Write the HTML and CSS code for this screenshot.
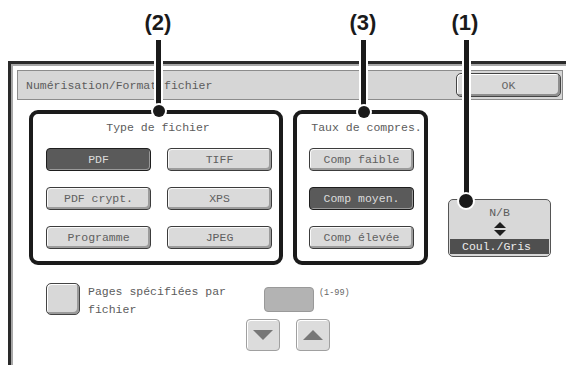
FILE: index.html
```html
<!doctype html>
<html>
  <head>
    <title>Numérisation/Format fichier</title>
    <meta charset="utf-8" />
    <link rel="stylesheet" href="styles.css">
  </head>
  <body>
    <div class="screen">
      <div class="window">
        <div class="titlebar">
          <span class="title">Numérisation/Format fichier</span>
          <div class="ok-key">OK</div>
        </div>

        <div class="main">
          <div class="group group-type">
            <div class="group-title">Type de fichier</div>
            <div class="type-grid">
              <div class="key selected">PDF</div>
              <div class="key">TIFF</div>
              <div class="key">PDF crypt.</div>
              <div class="key">XPS</div>
              <div class="key">Programme</div>
              <div class="key">JPEG</div>
            </div>
          </div>

          <div class="group group-rate">
            <div class="group-title">Taux de compres.</div>
            <div class="rate-list">
              <div class="key">Comp faible</div>
              <div class="key selected">Comp moyen.</div>
              <div class="key">Comp élevée</div>
            </div>
          </div>

          <div class="mode-key">
            <span class="mode-top">N/B</span>
            <svg class="mode-arrows" width="12" height="14" viewBox="0 0 12 14">
              <polygon points="0,6 6,0 12,6" fill="#1e1e1e" />
              <polygon points="0,8 12,8 6,14" fill="#1e1e1e" />
            </svg>
            <span class="mode-bottom">Coul./Gris</span>
          </div>
        </div>

        <div class="bottom">
          <div class="check"></div>
          <div class="check-label">Pages spécifiées par<br>fichier</div>
          <div class="spinner">
            <div class="spin-row">
              <div class="spin-value"></div>
              <span class="spin-hint">(1-99)</span>
            </div>
            <div class="spin-keys">
              <div class="step-key">
                <svg width="20" height="10" viewBox="0 0 20 10"><polygon points="0,0 20,0 10,10" fill="#777" /></svg>
              </div>
              <div class="step-key">
                <svg width="20" height="10" viewBox="0 0 20 10"><polygon points="0,10 20,10 10,0" fill="#777" /></svg>
              </div>
            </div>
          </div>
        </div>
      </div>

      <!-- callouts -->
      <div class="callout-label c2">(2)</div>
      <div class="callout-line l2"></div>
      <div class="callout-dot d2"></div>

      <div class="callout-label c3">(3)</div>
      <div class="callout-line l3"></div>
      <div class="callout-dot d3"></div>

      <div class="callout-label c1">(1)</div>
      <div class="callout-line l1"></div>
      <div class="callout-dot d1"></div>
    </div>
  </body>
</html>
```

FILE: styles.css
```css
* {
  box-sizing: border-box;
}

body {
  margin: 0;
  padding: 0;
  background: #fff;
  font-family: "Liberation Mono", "DejaVu Sans Mono", monospace;
  font-size: 11.5px;
  color: #5c5c5c;
}

.screen {
  position: relative;
  width: 566px;
  height: 365px;
  overflow: hidden;
  background: #fff;
}

.window {
  margin: 61px 0 0 8px;
  height: 304px;
  border-top: 3px solid #2a2a2a;
  border-left: 3px solid #2a2a2a;
  box-shadow: inset 2px 2px 0 #a8a8a8;
  overflow: hidden;
}

.titlebar {
  margin: 6px 3px 0 6px;
  height: 30px;
  padding: 0 1px 0 8px;
  border: 1px solid #8c8c8c;
  background: #d6d6d6;
  display: flex;
  align-items: center;
  justify-content: space-between;
}

.ok-key {
  width: 105px;
  height: 24px;
  border: 1px solid #444;
  border-radius: 5px;
  background: #dadada;
  box-shadow: inset -2px -2px 0 #8e8e8e, inset 1px 1px 0 #fff;
  display: grid;
  place-items: center;
  color: #666;
}

.main {
  margin-top: 10px;
  padding-left: 18px;
  display: flex;
  align-items: flex-start;
}

.group {
  height: 155px;
  border: 4px solid #1b1b1b;
  border-radius: 9px;
}

.group-title {
  padding-top: 8px;
  line-height: 12px;
  height: 34px;
  text-align: center;
}

.group-type {
  width: 254px;
  padding: 0 9px 0 13px;
}

.type-grid {
  display: grid;
  grid-template-columns: 105px 105px;
  column-gap: 16px;
  row-gap: 16px;
}

.group-rate {
  width: 135px;
  margin-left: 10px;
  padding-left: 12px;
}

.rate-list {
  display: flex;
  flex-direction: column;
  gap: 16px;
}

.key {
  width: 105px;
  height: 23px;
  border: 1px solid #3c3c3c;
  border-radius: 4px;
  background: #dadada;
  box-shadow: inset -2px -2px 0 #9c9c9c, inset 1px 1px 0 #fafafa;
  display: grid;
  place-items: center;
  white-space: nowrap;
  color: #606060;
}

.key.selected {
  background: #5a5a5a;
  border-color: #1e1e1e;
  box-shadow: inset -1px -1px 0 #9a9a9a;
  color: #dcdcdc;
}

.mode-key {
  width: 103px;
  height: 58px;
  margin: 89px 0 0 20px;
  border: 1px solid #555;
  border-radius: 5px;
  background: #d8d8d8;
  padding: 2px 1px 2px 1px;
  display: flex;
  flex-direction: column;
  align-items: center;
}

.mode-top {
  margin-top: 5px;
  line-height: 12px;
}

.mode-arrows {
  margin-top: 3px;
}

.mode-bottom {
  margin-top: auto;
  width: 100%;
  height: 15px;
  line-height: 15px;
  padding-left: 12px;
  background: #4f4f4f;
  color: #ededed;
}

.bottom {
  margin-top: 18px;
  padding-left: 35px;
  display: flex;
  align-items: flex-start;
}

.check {
  width: 34px;
  height: 32px;
  border: 1px solid #444;
  border-radius: 5px;
  background: #d8d8d8;
  box-shadow: inset -2px -2px 0 #9a9a9a, inset 1px 1px 0 #fff;
}

.check-label {
  width: 160px;
  margin-left: 8px;
  line-height: 18px;
}

.spinner {
  margin-left: -2px;
  margin-top: 4px;
  width: 84px;
}

.spin-row {
  padding-left: 18px;
  display: flex;
  align-items: flex-start;
  gap: 5px;
}

.spin-value {
  width: 50px;
  height: 25px;
  flex: none;
  border: 1px solid #999;
  border-radius: 4px;
  background: #b3b3b3;
}

.spin-hint {
  font-size: 8.5px;
  margin-top: 1px;
  color: #666;
  white-space: nowrap;
}

.spin-keys {
  margin-top: 7px;
  display: flex;
  gap: 16px;
}

.step-key {
  width: 34px;
  height: 32px;
  border: 1px solid #a0a0a0;
  border-radius: 4px;
  background: #dcdcdc;
  box-shadow: inset 1px 1px 0 #fff;
  display: grid;
  place-items: center;
}

.callout-label {
  position: absolute;
  top: 10px;
  width: 40px;
  text-align: center;
  font-family: "Liberation Sans", Arial, sans-serif;
  font-weight: bold;
  font-size: 22px;
  line-height: 26px;
  color: #1a1a1a;
}

.callout-line {
  position: absolute;
  top: 40px;
  width: 5px;
  background: #1a1a1a;
  box-shadow: 0 0 0 2px #fff;
}

.callout-dot {
  position: absolute;
  width: 12px;
  height: 12px;
  border-radius: 50%;
  background: #1a1a1a;
  box-shadow: 0 0 0 2px #fff;
}

.c2 { left: 138px; }
.l2 { left: 156px; height: 70px; }
.d2 { left: 153px; top: 105px; }

.c3 { left: 343px; }
.l3 { left: 361px; height: 70px; }
.d3 { left: 358px; top: 106px; }

.c1 { left: 445px; }
.l1 { left: 464px; height: 160px; }
.d1 { left: 459px; top: 194px; width: 14px; height: 14px; }
```
